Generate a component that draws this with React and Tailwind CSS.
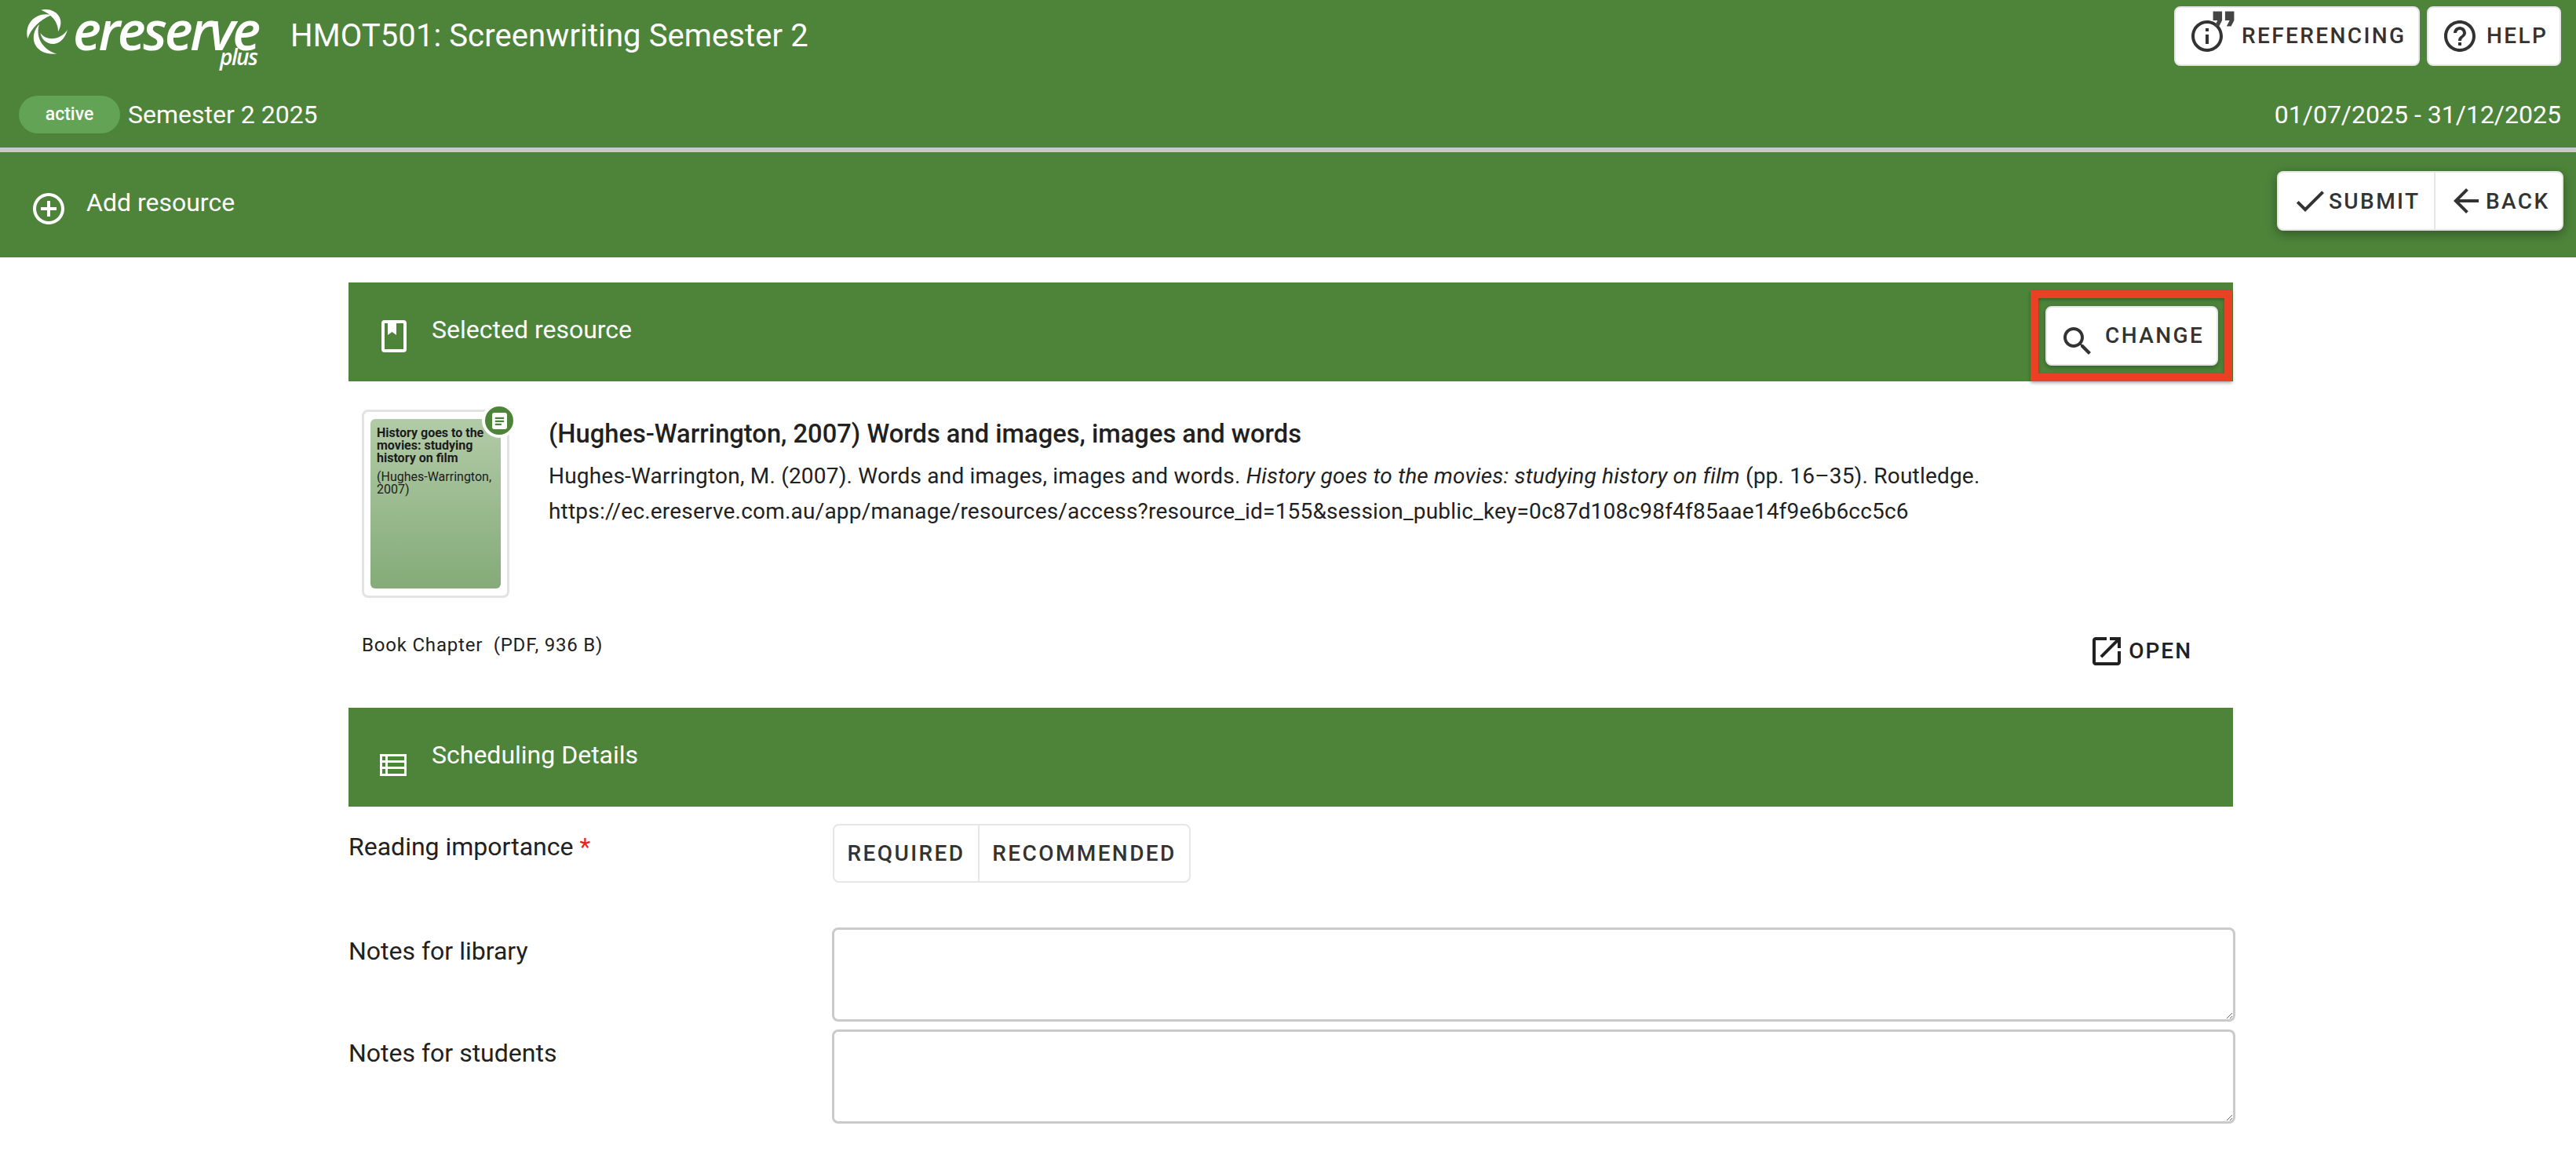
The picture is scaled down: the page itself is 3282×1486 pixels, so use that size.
function MaterialIcon({ d, className }) {
  return (
    <svg viewBox="0 0 24 24" fill="currentColor" className={className}>
      <path d={d} />
    </svg>
  );
}

const ICONS = {
  addCircle: 'M13 7h-2v4H7v2h4v4h2v-4h4v-2h-4V7zm-1-5C6.48 2 2 6.48 2 12s4.48 10 10 10 10-4.48 10-10S17.52 2 12 2zm0 18c-4.41 0-8-3.59-8-8s3.59-8 8-8 8 3.59 8 8-3.59 8-8 8z',
  help: 'M11 18h2v-2h-2v2zm1-16C6.48 2 2 6.48 2 12s4.48 10 10 10 10-4.48 10-10S17.52 2 12 2zm0 18c-4.41 0-8-3.59-8-8s3.59-8 8-8 8 3.59 8 8-3.59 8-8 8zm0-14c-2.21 0-4 1.79-4 4h2c0-1.1.9-2 2-2s2 .9 2 2c0 2-3 1.75-3 5h2c0-2.25 3-2.5 3-5 0-2.21-1.79-4-4-4z',
  info: 'M11 7h2v2h-2zm0 4h2v6h-2zm1-9C6.48 2 2 6.48 2 12s4.48 10 10 10 10-4.48 10-10S17.52 2 12 2zm0 18c-4.41 0-8-3.59-8-8s3.59-8 8-8 8 3.59 8 8-3.59 8-8 8z',
  quote: 'M6 17h3l2-4V7H5v6h3zm8 0h3l2-4V7h-6v6h3z',
  open: 'M19 19H5V5h7V3H5c-1.11 0-2 .9-2 2v14c0 1.1.89 2 2 2h14c1.1 0 2-.9 2-2v-7h-2v7zM14 3v2h3.59l-9.83 9.83 1.41 1.41L19 6.41V10h2V3h-7z',
  check: 'M9 16.17L4.83 12l-1.41 1.41L9 19 21 7l-1.41-1.41z',
  back: 'M20 11H7.83l5.59-5.59L12 4l-8 8 8 8 1.41-1.41L7.83 13H20v-2z',
  search: 'M15.5 14h-.79l-.28-.27C15.41 12.59 16 11.11 16 9.5 16 5.91 13.09 3 9.5 3S3 5.91 3 9.5 5.91 16 9.5 16c1.61 0 3.09-.59 4.23-1.57l.27.28v.79l5 4.99L20.49 19l-4.99-5zm-6 0C7.01 14 5 11.99 5 9.5S7.01 5 9.5 5 14 7.01 14 9.5 11.99 14 9.5 14z',
};

function Swirl() {
  return (
    <svg viewBox="0 0 210 210" fill="#fff" className="w-[70px] h-[70px] absolute left-[24px] top-[6px]">
      <path d="M85 20C135 8 182 50 150 103C152 68 125 35 85 20Z" />
      <path d="M124 40C75 25 18 65 34 130C46 92 80 58 124 40Z" />
      <path d="M78 75C38 115 50 195 146 188C102 178 60 132 78 75Z" />
      <path d="M82 108C92 160 165 172 186 95C165 130 110 145 82 108Z" />
    </svg>
  );
}

function Logo() {
  return (
    <div className="relative w-[350px] h-[100px] shrink-0 text-white">
      <Swirl />
      <span className="absolute left-[93px] top-[16px] font-['Open_Sans',sans-serif] font-semibold italic text-[68px] leading-[44px] tracking-[-3.4px]">
        ereserve
      </span>
      <span className="absolute left-[280px] top-[60px] font-['Open_Sans',sans-serif] font-semibold italic text-[28px] leading-[24px] tracking-[-1.5px]">
        plus
      </span>
    </div>
  );
}

function WhiteButton({ className, children }) {
  return (
    <button className={`flex items-center bg-white rounded-[8px] border-2 border-[#e6e6e6] h-[76px] text-[#333333] text-[28px] font-medium tracking-[2.4px] ${className}`}>
      {children}
    </button>
  );
}

function SectionBar({ icon, title, children }) {
  return (
    <div className="relative flex items-start h-[126px] bg-[#4d843a] text-white">
      <div className="ml-[34px] mt-[44px] w-[48px] h-[48px] flex items-center justify-center">{icon}</div>
      <span className="ml-[24px] mt-[40px] text-[32px] leading-[40px]">{title}</span>
      {children}
    </div>
  );
}

function App() {
  return (
    <div className="w-[3282px] h-[1486px] bg-white overflow-hidden font-['Roboto',sans-serif] text-[#212121]">
      {/* Top header */}
      <header className="bg-[#4d843a] text-white">
        <div className="flex items-start h-[104px]">
          <Logo />
          <h1 className="ml-[20px] mt-[22px] text-[40px] leading-[48px] font-normal tracking-[0.1px]">
            HMOT501: Screenwriting Semester 2
          </h1>
          <div className="ml-auto mr-[19px] mt-[8px] flex gap-[9px]">
            <WhiteButton className="w-[313px] pl-[16px]">
              <span className="relative w-[48px] h-[48px] shrink-0">
                <MaterialIcon d={ICONS.info} className="w-[48px] h-[48px]" />
                <MaterialIcon d={ICONS.quote} className="absolute -top-[21px] left-[22px] w-[46px] h-[46px] text-[#444444]" />
              </span>
              <span className="ml-[20px]">REFERENCING</span>
            </WhiteButton>
            <WhiteButton className="w-[171px] pl-[16px]">
              <MaterialIcon d={ICONS.help} className="w-[48px] h-[48px] shrink-0" />
              <span className="ml-[10px]">HELP</span>
            </WhiteButton>
          </div>
        </div>
        <div className="flex items-center h-[84px] pl-[24px] pr-[19px]">
          <span className="flex items-center justify-center w-[129px] h-[48px] rounded-full bg-[#62a356] text-[23px] font-medium">
            active
          </span>
          <span className="ml-[10px] text-[32px]">Semester 2 2025</span>
          <span className="ml-auto text-[32px]">01/07/2025 - 31/12/2025</span>
        </div>
      </header>

      <div className="h-[6px] bg-[#c9c9c9]" />

      {/* Action bar */}
      <div className="flex items-start h-[134px] bg-[#4d843a] text-white">
        <MaterialIcon d={ICONS.addCircle} className="ml-[38px] mt-[48px] w-[48px] h-[48px]" />
        <span className="ml-[24px] mt-[44px] text-[32px] leading-[40px]">Add resource</span>
        <div className="ml-auto mr-[16px] mt-[24px] flex h-[76px] w-[365px] rounded-[8px] bg-white border-2 border-[#e6e6e6] shadow-[0_4px_14px_rgba(0,0,0,0.35)] text-[#333333] text-[28px] font-medium tracking-[2.4px]">
          <button className="flex items-center w-[200px] pl-[16px] border-r-2 border-[#e6e6e6]">
            <MaterialIcon d={ICONS.check} className="w-[48px] h-[48px] shrink-0" />
            <span className="mt-[2px]">SUBMIT</span>
          </button>
          <button className="flex items-center flex-1 pl-[15px]">
            <MaterialIcon d={ICONS.back} className="w-[48px] h-[48px] shrink-0" />
            <span className="ml-[1px] mt-[2px]">BACK</span>
          </button>
        </div>
      </div>

      <main className="ml-[444px] w-[2401px] mt-[32px]">
        <SectionBar
          icon={
            <svg viewBox="0 0 32 41" className="w-[32px] h-[41px]" fill="#fff">
              <path fillRule="evenodd" d="M4 0h24a4 4 0 0 1 4 4v33a4 4 0 0 1-4 4H4a4 4 0 0 1-4-4V4a4 4 0 0 1 4-4zM4 4v33h24V4z" />
              <path d="M8 4h11v15l-5.5-4L8 19z" />
            </svg>
          }
          title="Selected resource"
        >
          <WhiteButton className="ml-auto mr-[19px] mt-[30px] w-[220px] pl-[15px] shadow-[0_2px_6px_rgba(0,0,0,0.3)]">
            <MaterialIcon d={ICONS.search} className="w-[48px] h-[48px] mt-[14px] shrink-0" />
            <span className="ml-[11px] -mt-[1px]">CHANGE</span>
          </WhiteButton>
          {/* Highlight drawn over the screenshot */}
          <div className="absolute right-[1px] top-[10px] w-[257px] h-[116px] border-[10px] border-[#ea4125] shadow-[0_2px_4px_rgba(0,0,0,0.35),inset_0_2px_4px_rgba(0,0,0,0.3)]" />
        </SectionBar>

        <div className="flex items-start pl-[17px] pt-[36px]">
          <div className="relative w-[188px] h-[240px] shrink-0 rounded-[8px] border-[3px] border-[#e3e3e3] px-[8px] py-[9px]">
            <div className="h-full rounded-[6px] bg-gradient-to-b from-[#b2cba7] to-[#84ab78] px-[8px] pt-[10px] text-[#1c1c1c] text-[16px] leading-[16px]">
              <p className="font-bold">History goes to the movies: studying history on film</p>
              <p className="mt-[8px]">(Hughes-Warrington, 2007)</p>
            </div>
            <div className="absolute -top-[11px] -right-[12px] w-[44px] h-[44px] rounded-full bg-[#4d843a] border-[4px] border-white flex items-center justify-center">
              <svg viewBox="0 0 20 22" className="w-[19px] h-[21px]">
                <rect width="20" height="22" rx="3" fill="#fff" />
                <path d="M4 6h12v2.4H4zM4 10.2h12v2.4H4zM4 14.4h8.5v2.4H4z" fill="#4d843a" />
              </svg>
            </div>
          </div>
          <div className="ml-[50px] pt-[9px]">
            <h2 className="text-[32.7px] leading-[44px] font-medium">
              (Hughes-Warrington, 2007) Words and images, images and words
            </h2>
            <p className="mt-[9px] text-[28px] leading-[45px] tracking-[0.2px]">
              Hughes-Warrington, M. (2007). Words and images, images and words. <i>History goes to the movies: studying history on film</i> (pp. 16–35). Routledge.
              <br />
              https://ec.ereserve.com.au/app/manage/resources/access?resource_id=155&amp;session_public_key=0c87d108c98f4f85aae14f9e6b6cc5c6
            </p>
          </div>
        </div>

        <div className="flex items-start justify-between h-[140px] pl-[17px]">
          <span className="mt-[44px] text-[24px] leading-[32px] tracking-[0.8px] whitespace-pre">Book Chapter  (PDF, 936 B)</span>
          <button className="mr-[52px] mt-[44px] flex items-center text-[28px] font-medium tracking-[2px]">
            <MaterialIcon d={ICONS.open} className="w-[48px] h-[48px] shrink-0" />
            <span className="ml-[4px]">OPEN</span>
          </button>
        </div>

        <SectionBar
          icon={
            <svg viewBox="0 0 34 28" className="w-[34px] h-[28px] mt-[10px] -ml-[2px]" fill="#fff" fillRule="evenodd">
              <path d="M0 0h34v28H0zM3 3v5h4V3zM10 3v5h21V3zM3 11v5h4v-5zM10 11v5h21v-5zM3 19v6h4v-6zM10 19v6h21v-6z" />
            </svg>
          }
          title="Scheduling Details"
        />

        <div className="flex items-start h-[154px]">
          <label className="w-[616px] shrink-0 mt-[31px] text-[32px] leading-[40px]">
            Reading importance <span className="text-[#f01e14]">*</span>
          </label>
          <div className="ml-[1px] mt-[22px] flex h-[75px] rounded-[8px] border-2 border-[#e6e6e6] text-[#333333] text-[28px] font-medium tracking-[2.4px]">
            <button className="w-[185px] border-r-2 border-[#e6e6e6]">REQUIRED</button>
            <button className="w-[267px]">RECOMMENDED</button>
          </div>
        </div>

        <div className="flex items-start h-[130px]">
          <label className="w-[616px] shrink-0 mt-[10px] text-[32px] leading-[40px]">Notes for library</label>
          <textarea className="w-[1788px] h-[120px] shrink-0 rounded-[8px] border-[3px] border-[#cacaca] bg-white" />
        </div>
        <div className="flex items-start">
          <label className="w-[616px] shrink-0 mt-[10px] text-[32px] leading-[40px]">Notes for students</label>
          <textarea className="w-[1788px] h-[120px] shrink-0 rounded-[8px] border-[3px] border-[#cacaca] bg-white" />
        </div>
      </main>
    </div>
  );
}

export default App;
